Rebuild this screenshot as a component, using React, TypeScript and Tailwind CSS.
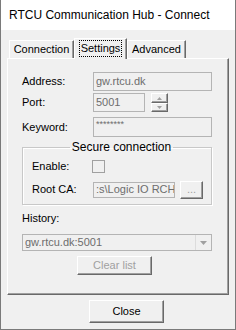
import React from "react";

const raised =
  "border border-t-white border-l-white border-r-[#696969] border-b-[#696969] shadow-[inset_-1px_-1px_0_#a0a0a0]";
const edit = "border border-[#b4b4b4] bg-[#f0f0f0] text-[#6d6d6d] px-[2px] flex items-center";

function Tab({ label, active }: { label: string; active?: boolean }) {
  if (active) {
    return (
      <div className="relative z-10 -mb-px h-[21px] w-[53px] flex items-start justify-center pt-[2px] bg-[#f0f0f0] border-t border-l border-t-white border-l-white border-r border-r-[#696969] shadow-[inset_-1px_0_0_#a0a0a0]">
        <span className="outline-1 outline-dotted outline-black px-[1px] leading-[15px]">{label}</span>
      </div>
    );
  }
  return (
    <div className="h-[18px] flex items-center justify-center px-[5px] border-t border-l border-t-white border-l-white border-r border-r-[#696969] shadow-[inset_-1px_0_0_#a0a0a0]">
      {label}
    </div>
  );
}

export default function App() {
  return (
    <div
      className="w-[236px] h-[330px] bg-[#f0f0f0] border-l border-r border-b border-[#7a7a7a] flex flex-col text-[11px] leading-[13px] text-black"
      style={{ fontFamily: '"Liberation Sans", Arial, sans-serif' }}
    >
      <div className="h-[30px] shrink-0 bg-white flex items-center pl-[8px] text-[12px]">
        RTCU Communication Hub - Connect
      </div>

      <div className="pl-[6px] pt-[8px] flex flex-col">
        {/* tab strip */}
        <div className="flex items-end h-[20px] pl-[2px]">
          <div className="w-[65px]">
            <Tab label="Connection" />
          </div>
          <Tab label="Settings" active />
          <div className="w-[59px]">
            <Tab label="Advanced" />
          </div>
        </div>

        {/* panel */}
        <div className="w-[222px] h-[237px] border border-t-white border-l-white border-r-[#696969] border-b-[#696969] shadow-[inset_-1px_-1px_0_#a0a0a0] pl-[14px] flex flex-col">
          <div className="flex items-center h-[19px] mt-[13px]">
            <div className="w-[71px]">Address:</div>
            <div className={`${edit} w-[119px] h-[19px]`}>gw.rtcu.dk</div>
          </div>

          <div className="flex items-center h-[19px] mt-[2px]">
            <div className="w-[71px]">Port:</div>
            <div className={`${edit} w-[52px] h-[19px]`}>5001</div>
            <div className="ml-[6px] w-[17px] h-[19px] flex flex-col">
              <div className={`${raised} h-[10px] flex items-center justify-center`}>
                <svg width="5" height="3" viewBox="0 0 5 3">
                  <path d="M2.5 0 L5 3 L0 3 Z" fill="#a0a0a0" />
                </svg>
              </div>
              <div className={`${raised} h-[9px] flex items-center justify-center`}>
                <svg width="5" height="3" viewBox="0 0 5 3">
                  <path d="M0 0 L5 0 L2.5 3 Z" fill="#a0a0a0" />
                </svg>
              </div>
            </div>
          </div>

          <div className="flex items-center h-[20px] mt-[5px]">
            <div className="w-[71px]">Keyword:</div>
            <div className={`${edit} w-[119px] h-[20px] !items-start pt-[1px] text-[9px] leading-[10px]`}>********</div>
          </div>

          {/* group box */}
          <fieldset className="mt-[4px] w-[190px] border border-[#c8c8c8] shadow-[inset_1px_1px_0_#fff,1px_1px_0_#fff] pl-[9px] pb-[6px] m-0">
            <legend className="mx-auto px-[2px] leading-[13px] text-[12px]">Secure connection</legend>
            <div className="flex items-center h-[13px] mt-[6px]">
              <div className="w-[60px]">Enable:</div>
              <div className="w-[13px] h-[13px] border border-[#a0a0a0] bg-[#f0f0f0]" />
            </div>
            <div className="flex items-center h-[17px] mt-[8px]">
              <div className="w-[61px]">Root CA:</div>
              <div className={`${edit} w-[82px] h-[16px] overflow-hidden whitespace-nowrap`}>:s\Logic IO RCH</div>
              <div className={`${raised} ml-[5px] w-[23px] h-[18px] flex items-center justify-center text-[#a0a0a0]`}>...</div>
            </div>
          </fieldset>

          <div className="mt-[7px] h-[13px]">History:</div>

          <div className="mt-[9px] w-[190px] h-[17px] border border-[#b4b4b4] flex items-center text-[#6d6d6d]">
            <div className="flex-1 pl-[2px]">gw.rtcu.dk:5001</div>
            <div className="w-[16px] h-[15px] border-l border-[#dcdcdc] flex items-center justify-center">
              <svg width="7" height="4" viewBox="0 0 7 4">
                <path d="M0 0 L7 0 L3.5 4 Z" fill="#a0a0a0" />
              </svg>
            </div>
          </div>

          <div className={`${raised} mt-[5px] ml-[55px] w-[75px] h-[19px] flex items-center justify-center text-[#a0a0a0]`}>
            Clear list
          </div>
        </div>

        <div className={`${raised} mt-[5px] ml-[82px] w-[75px] h-[23px] flex items-center justify-center`}>
          Close
        </div>
      </div>
    </div>
  );
}
